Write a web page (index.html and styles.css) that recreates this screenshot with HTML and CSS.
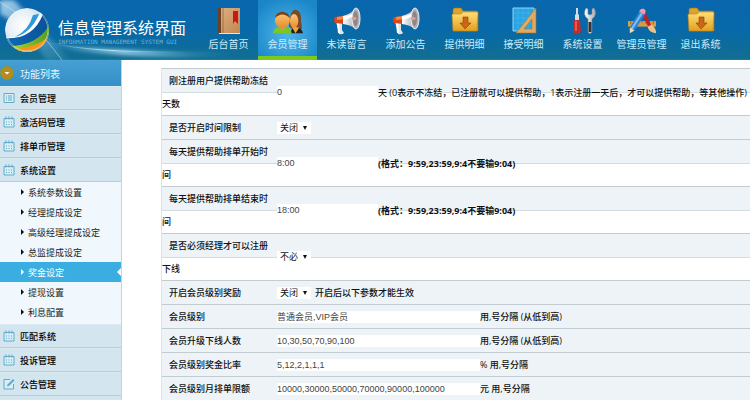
FILE: index.html
```html
<!DOCTYPE html>
<html lang="zh-CN">
<head>
  <meta charset="UTF-8" />
  <meta name="viewport" content="width=device-width, initial-scale=1.0"/>
  <title>信息管理系统界面</title>
  <link rel="stylesheet" href="styles.css">
</head>
<body>
  <!-- shared icons -->
  <svg class="defs" width="0" height="0" aria-hidden="true">
    <defs>
      <linearGradient id="gold" x1="0" y1="0" x2="0" y2="1"><stop offset="0" stop-color="#ffdf78"/><stop offset="1" stop-color="#e0a020"/></linearGradient>
      <linearGradient id="cover" x1="0" y1="0" x2="1" y2="1"><stop offset="0" stop-color="#e0b184"/><stop offset="1" stop-color="#c08650"/></linearGradient>
      <linearGradient id="metal" x1="0" y1="0" x2="1" y2="0"><stop offset="0" stop-color="#fff"/><stop offset="1" stop-color="#a9a9ad"/></linearGradient>
      <linearGradient id="skin" x1="0" y1="0" x2="0" y2="1"><stop offset="0" stop-color="#ffc778"/><stop offset="1" stop-color="#e48d2c"/></linearGradient>
      <radialGradient id="ball" cx=".4" cy=".4" r=".6"><stop offset="0" stop-color="#fff"/><stop offset=".6" stop-color="#e4eef5"/><stop offset="1" stop-color="#a8c4d8"/></radialGradient>
      <linearGradient id="wave" x1="0" y1="0" x2="1" y2="0"><stop offset="0" stop-color="#0e6cb4"/><stop offset="1" stop-color="#0a4f96"/></linearGradient>
      <linearGradient id="green" x1="0" y1="0" x2="1" y2="0"><stop offset="0" stop-color="#b5d62a"/><stop offset="1" stop-color="#4a9c28"/></linearGradient>
      <linearGradient id="streak" x1="0" y1="0" x2="1" y2="0"><stop offset="0" stop-color="#9fdcf5" stop-opacity="0"/><stop offset=".45" stop-color="#c8f0ff" stop-opacity=".9"/><stop offset="1" stop-color="#6cc0e8" stop-opacity="0"/></linearGradient>
      <linearGradient id="beam" x1="0" y1="0" x2="1" y2="1"><stop offset="0" stop-color="#cfeaf8" stop-opacity=".8"/><stop offset="1" stop-color="#7cc4e8" stop-opacity=".1"/></linearGradient>
      <filter id="soft" x="-10%" y="-50%" width="120%" height="200%"><feGaussianBlur stdDeviation="2"/></filter>
      <clipPath id="round"><circle cx="24" cy="24" r="22"/></clipPath>

      <symbol id="horn" viewBox="0 0 28 28">
        <path d="M3 15l6 1 0 7 2 3q-2 2-5 1-1-6-3-12z" fill="#dfe6ea"/>
        <path d="M4 16l2 0 1 10-2 0z" fill="#fff"/>
        <path d="M2 10l9-1v8l-9-1q-2-3 0-6z" fill="#d8481c"/>
        <path d="M4 10l7-1v3l-7 1z" fill="#f58a4c"/>
        <path d="M10 9q8-2 13-8v21q-5-4-13-5z" fill="url(#metal)"/>
        <path d="M10 10q7-1 11-5v4q-5 3-11 4z" fill="#fff"/>
        <ellipse cx="23" cy="11.500" rx="4" ry="10.500" fill="#b4b0b4" stroke="#eee"/>
        <ellipse cx="22.500" cy="11.500" rx="2.500" ry="7.500" fill="#8d868a"/>
        <path d="M19 10q4-1 5 1.500-1 2.500-5 1.500z" fill="#d8a58c"/>
      </symbol>
      <symbol id="folder" viewBox="0 0 28 28">
        <path d="M2 3q0-2 2-2h6l2 3h13q2 0 2 2v18H2z" fill="#dba42e" stroke="#a87414" stroke-width=".6"/>
        <path d="M1 8q0-1 1-1h8l2-2h14q1 0 1 1l-1 17q0 1-1 1H3q-1 0-1-1z" fill="url(#gold)" stroke="#b98518" stroke-width=".6"/>
        <path d="M12 10h5v6h3l-6 6-5-6h3z" fill="#c9661a" stroke="#92420c" stroke-width=".6"/>
      </symbol>
      <symbol id="calendar" viewBox="0 0 12 12">
        <path d="M1 2.500h10v8.500H1zM3 .5v3M6 .5v3M9 .5v3" fill="#d9edf5" stroke="#62abc9"/>
        <path d="M3 6h1M5.500 6h1M8 6h1M3 8.500h1M5.500 8.500h1M8 8.500h1" stroke="#62abc9"/>
      </symbol>
    </defs>
  </svg>

  <header class="header">
    <svg class="glow" viewBox="0 0 260 60" aria-hidden="true">
      <path d="M0 0h14L70 60H46Q30 30 0 14z" fill="url(#beam)" filter="url(#soft)"/>
      <path d="M0 2Q35 22 62 60" fill="none" stroke="#d8f1fc" stroke-opacity=".5"/>
      <path d="M30 40Q90 52 240 54Q110 62 30 40z" fill="url(#streak)" filter="url(#soft)"/>
      <path d="M46 42Q90 53 190 52" fill="none" stroke="url(#streak)"/>
    </svg>
    <div class="brand">
      <svg class="logo" viewBox="0 0 48 48" aria-hidden="true">
        <g clip-path="url(#round)">
          <circle cx="24" cy="24" r="22" fill="url(#ball)"/>
          <path d="M2 31Q26 34 38 5L48 10V48H2z" fill="#fff"/>
          <path d="M2 32Q30 34 40 8L48 16Q40 42 8 42z" fill="url(#wave)"/>
          <path d="M30 9Q26 24 12 31Q28 27 36 8z" fill="#2d9bd5"/>
          <path d="M6 40Q34 40 47 18L48 34Q32 42 14 46z" fill="url(#green)"/>
          <path d="M12 43Q32 42 47 30L42 48H12z" fill="#f7941d"/>
        </g>
        <circle cx="24" cy="24" r="21" fill="none" stroke="#e8f6fc" stroke-opacity=".5"/>
      </svg>
      <div class="brand-text">
        <h1>信息管理系统界面</h1>
        <p>INFORMATION MANAGEMENT SYSTEM GUI</p>
      </div>
    </div>

    <nav class="topnav">
      <a href="#">
        <svg viewBox="0 0 28 28"><path d="M3 1h22v25H3z" fill="url(#cover)"/><path d="M3 1h3v25H3z" fill="#6b4023"/><path d="M4 26h21v1H4z" fill="#f2e2c6"/><path d="M8 1v25" stroke="#8a5a34" stroke-width=".7"/><path d="M18 4h5v13l-3-3-2 3z" fill="#c8161c"/></svg>
        <span>后台首页</span>
      </a>
      <a href="#" class="active">
        <svg viewBox="0 0 32 28"><path d="M17 20q1-18 7-18 6 0 6 12l1 8q-7 4-14-2z" fill="#7a4a28"/><path d="M19 27q0-6 5-6 7 0 8 6z" fill="#222"/><ellipse cx="22.500" cy="14" rx="4.500" ry="7.500" fill="url(#skin)"/><path d="M20 20l4 7 4-6z" fill="#f0a347"/><path d="M0 27q0-7 10-7t10 7z" fill="#7cc62a"/><path d="M6 19h8l-4 5z" fill="#e9953a"/><ellipse cx="10" cy="13" rx="8" ry="8.500" fill="url(#skin)"/><path d="M2 11q1-7 8-7t8 7q-4-4-8-4t-8 4z" fill="#75411d"/></svg>
        <span>会员管理</span>
      </a>
      <a href="#"><svg><use href="#horn"/></svg><span>未读留言</span></a>
      <a href="#"><svg><use href="#horn"/></svg><span>添加公告</span></a>
      <a href="#"><svg><use href="#folder"/></svg><span>提供明细</span></a>
      <a href="#">
        <svg viewBox="0 0 28 28"><path d="M3 1h21v23H3z" fill="#2aa5e4" stroke="#8cd8fa"/><path d="M8 1v23M13 1v23M18 1v23M3 6h21M3 11h21M3 16h21" stroke="#7ccdf5" stroke-opacity=".4" stroke-width=".6"/><path d="M26 1v25H6zM22 12v10h-8z" fill="#dfab62" stroke="#a77230" stroke-width=".6" fill-rule="evenodd"/></svg>
        <span>接受明细</span>
      </a>
      <a href="#">
        <svg viewBox="0 0 28 28"><path d="M7 1h2v6l1 1v5H6V8l1-1z" fill="#d6dce0"/><path d="M5 13h6l1 12q-4 3-8 0z" fill="#c82a2a"/><path d="M7 14v10" stroke="#f58a80"/><path d="M17 1l2 1v5l2 1 2-1V2l2-1q4 7-2 11v13q-2 3-4 0V12q-6-4-2-11z" fill="url(#metal)" stroke="#7d858c" stroke-width=".5"/><path d="M19.500 15h3v10h-3z" fill="#333"/></svg>
        <span>系统设置</span>
      </a>
      <a href="#">
        <svg viewBox="0 0 32 28"><path d="M1 14h30v6H1z" fill="#d99a45"/><path d="M4 14v3M8 14v2M12 14v3M16 14v2M20 14v3M24 14v2M28 14v3" stroke="#875317" stroke-width=".7"/><path d="M15 5l4-2 7 16-3 2z" fill="#b8242a"/><path d="M22 20l4-2q5 3 5 9-8-1-9-7z" fill="#ebc28c"/><path d="M13 4l6 3L8 24l-5-3z" fill="#2e83d3"/><path d="M15 5l2 1L6 23l-2-1z" fill="#7dbdf0"/><path d="M3 21l5 3-5 3z" fill="#f2d9b0"/><path d="M13 4q1-4 5-3l2 2-1 4z" fill="#f29bb0"/></svg>
        <span>管理员管理</span>
      </a>
      <a href="#"><svg><use href="#folder"/></svg><span>退出系统</span></a>
    </nav>
  </header>

  <div class="layout">
    <aside class="sidebar">
      <h2>
        <svg viewBox="0 0 14 14"><circle cx="7" cy="7" r="6.500" fill="#b98b1c" stroke="#7f9b35"/><path d="M4.500 6h5L7 8.500z" fill="#fff"/></svg>
        功能列表
      </h2>
      <ul class="menu">
        <li><a href="#"><svg viewBox="0 0 12 12"><path d="M1 1.500h10v9H1z" fill="#d9edf5" stroke="#62abc9"/><path d="M3 4h1M3 6h1M3 8h1M5 4h4M5 6h4M5 8h4" stroke="#62abc9"/></svg>会员管理</a></li>
        <li><a href="#"><svg><use href="#calendar"/></svg>激活码管理</a></li>
        <li><a href="#"><svg><use href="#calendar"/></svg>排单币管理</a></li>
        <li>
          <a href="#"><svg><use href="#calendar"/></svg>系统设置</a>
          <ul class="submenu">
            <li><a href="#">系统参数设置</a></li>
            <li><a href="#">经理提成设定</a></li>
            <li><a href="#">高级经理提成设定</a></li>
            <li><a href="#">总监提成设定</a></li>
            <li><a href="#" class="current">奖金设定</a></li>
            <li><a href="#">提现设置</a></li>
            <li><a href="#">利息配置</a></li>
          </ul>
        </li>
        <li><a href="#"><svg><use href="#calendar"/></svg>匹配系统</a></li>
        <li><a href="#"><svg><use href="#calendar"/></svg>投诉管理</a></li>
        <li><a href="#"><svg viewBox="0 0 12 12"><path d="M10.500 6v5H1V1.500h6" fill="#d9edf5" stroke="#62abc9"/><path d="M4 8.500l.5-2L10 1l1.500 1.500L6 8z" fill="#62abc9"/></svg>公告管理</a></li>
      </ul>
    </aside>

    <main class="content">
      <form>
        <table class="settings">
          <tr class="tall">
            <th><label for="freeze">刚注册用户提供帮助冻结天数</label></th>
            <td><div class="field"><input type="text" id="freeze" value="0"><span>天 (0表示不冻结，已注册就可以提供帮助，1表示注册一天后，才可以提供帮助，等其他操作)</span></div></td>
          </tr>
          <tr>
            <th><label for="limit">是否开启时间限制</label></th>
            <td><div class="field"><div class="select"><select id="limit"><option>关闭</option><option>开启</option></select></div></div></td>
          </tr>
          <tr class="tall">
            <th><label for="start">每天提供帮助排单开始时间</label></th>
            <td><div class="field"><input type="text" id="start" value="8:00"><span class="strong">(格式：9:59,23:59,9:4不要输9:04)</span></div></td>
          </tr>
          <tr class="tall">
            <th><label for="end">每天提供帮助排单结束时间</label></th>
            <td><div class="field"><input type="text" id="end" value="18:00"><span class="strong">(格式：9:59,23:59,9:4不要输9:04)</span></div></td>
          </tr>
          <tr class="tall">
            <th><label for="manager">是否必须经理才可以注册下线</label></th>
            <td><div class="field"><div class="select"><select id="manager"><option>不必</option><option>必须</option></select></div></div></td>
          </tr>
          <tr>
            <th><label for="reward">开启会员级别奖励</label></th>
            <td><div class="field"><div class="select"><select id="reward"><option>关闭</option><option>开启</option></select></div><span>开启后以下参数才能生效</span></div></td>
          </tr>
          <tr>
            <th><label for="level">会员级别</label></th>
            <td><div class="field"><input type="text" class="wide" id="level" value="普通会员,VIP会员"><span>用,号分隔 (从低到高)</span></div></td>
          </tr>
          <tr>
            <th><label for="people">会员升级下线人数</label></th>
            <td><div class="field"><input type="text" class="wide" id="people" value="10,30,50,70,90,100"><span>用,号分隔 (从低到高)</span></div></td>
          </tr>
          <tr>
            <th><label for="rate">会员级别奖金比率</label></th>
            <td><div class="field"><input type="text" class="wide" id="rate" value="5,12,2,1,1,1"><span>% 用,号分隔</span></div></td>
          </tr>
          <tr>
            <th><label for="quota">会员级别月排单限额</label></th>
            <td><div class="field"><input type="text" class="wide" id="quota" value="10000,30000,50000,70000,90000,100000"><span>元 用,号分隔</span></div></td>
          </tr>
        </table>
      </form>
    </main>
  </div>
</body>
</html>
```
FILE: styles.css
```css
* {
  box-sizing: border-box;
}

body {
  margin: 0;
  font-family: "Open Sans", "Noto Sans CJK SC", sans-serif;
  font-size: 9px;
  color: #111;
  background: #fff;
  overflow-x: hidden;
}

a {
  text-decoration: none;
  color: inherit;
}

ul {
  list-style: none;
  margin: 0;
  padding: 0;
}

.defs {
  position: absolute;
}

/* header */
.header {
  position: relative;
  display: flex;
  height: 60px;
  background: linear-gradient(to bottom, #0966ad, #0769a9 50%, #126e92);
  border-bottom: 1px solid #1b7c96;
}

.glow {
  position: absolute;
  left: 0;
  top: 0;
  width: 260px;
  height: 60px;
}

.brand {
  position: relative;
  display: flex;
  align-items: center;
  gap: 7px;
  flex: 0 0 199px;
  padding-left: 3px;
}

.logo {
  width: 48px;
  height: 48px;
}

.brand-text {
  padding-top: 4px;
}

.brand-text h1 {
  margin: 0;
  font-size: 16px;
  line-height: 20px;
  font-weight: 400;
  color: #fff;
  white-space: nowrap;
}

.brand-text p {
  margin: 0;
  font-family: "DejaVu Sans Mono", monospace;
  font-size: 6px;
  line-height: 8px;
  color: #6fb2da;
  white-space: nowrap;
}

.topnav {
  position: relative;
  display: flex;
}

.topnav a {
  display: flex;
  flex-direction: column;
  align-items: center;
  width: 59px;
  height: 60px;
  padding-top: 7px;
  font-size: 10px;
  line-height: 16px;
  color: #c9ecfb;
  white-space: nowrap;
}

.topnav svg {
  width: 30px;
  height: 28px;
  margin-bottom: 1px;
}

.topnav a.active {
  background: radial-gradient(circle at 50% 60%, #4fb6ea, #1a86c8 85%);
  border-bottom: 4px solid #7ccb1c;
}

/* columns */
.layout {
  display: flex;
  min-height: calc(100vh - 60px);
}

.sidebar {
  flex: 0 0 122px;
  background: #d3e5ee;
  border-right: 1px solid #bfd5e0;
}

.sidebar h2 {
  display: flex;
  align-items: center;
  gap: 6px;
  height: 26px;
  margin: 0;
  font-size: 10px;
  font-weight: 400;
  color: #e6f6ff;
  background: linear-gradient(to bottom, #47a0d3, #348fc7);
}

.sidebar h2 svg {
  width: 14px;
  height: 14px;
}

.menu > li > a {
  display: flex;
  align-items: center;
  gap: 5px;
  height: 24px;
  padding-left: 3px;
  font-weight: 500;
  color: #000;
  border-top: 1px solid #dcebf2;
  border-bottom: 1px solid #b4cdd8;
}

.menu > li > a svg {
  width: 12px;
  height: 12px;
}

.submenu {
  padding-bottom: 2px;
  background: #f0f8fd;
}

.submenu a {
  position: relative;
  display: flex;
  align-items: center;
  gap: 4px;
  height: 20px;
  padding-left: 21px;
  color: #222;
}

.submenu a::before {
  content: "";
  border: 3px solid transparent;
  border-left: 3px solid #111;
  border-right: 0;
}

.submenu a.current {
  color: #fff;
  background: #3aaee0;
}

.submenu a.current::before {
  border-left-color: #fff;
}

.submenu a.current::after {
  content: "";
  position: absolute;
  right: 0;
  top: 6px;
  border: 4px solid transparent;
  border-right: 4px solid #fff;
  border-left: 0;
}

/* settings form */
.content {
  flex: 1;
  min-width: 0;
  padding: 8px 0 0 39px;
}

.settings {
  width: 100%;
  border-collapse: separate;
  border-spacing: 0;
  border-left: 1px solid #dde5e8;
}

.settings tr {
  height: 24px;
  background: #edf3f6;
}

.settings tr.tall {
  height: 47px;
  background: linear-gradient(to bottom, #edf3f6 24px, #d3dcdf 24px, #d3dcdf 25px, #fff 25px);
}

.settings th,
.settings td {
  padding: 0;
  border-top: 1px solid #c3cdd1;
  vertical-align: middle;
}

.settings th {
  width: 115px;
  padding-right: 8px;
  text-align: left;
  text-indent: 7px;
  font-weight: 500;
  line-height: 23px;
}

.field {
  display: flex;
  align-items: center;
  font-weight: 500;
  white-space: nowrap;
}

.field .strong {
  font-weight: 700;
}

.field input {
  width: 101px;
  height: 12px;
  padding: 0;
  border: 0;
  background: #fff;
  font-family: "Liberation Sans", "Noto Sans CJK SC", sans-serif;
  font-size: 9px;
  color: #444;
}

.field input.wide {
  width: 203px;
}

.select {
  position: relative;
  margin-right: 4px;
}

.select select {
  display: block;
  width: 34px;
  height: 12px;
  padding: 0 0 0 3px;
  border: 0;
  border-radius: 0;
  appearance: none;
  background: #fff;
  font-family: inherit;
  font-size: 9px;
  line-height: 12px;
  color: #111;
}

.select::after {
  content: "";
  position: absolute;
  right: 4px;
  top: 4px;
  border: 2px solid transparent;
  border-top: 4px solid #111;
  border-bottom: 0;
  pointer-events: none;
}
```
